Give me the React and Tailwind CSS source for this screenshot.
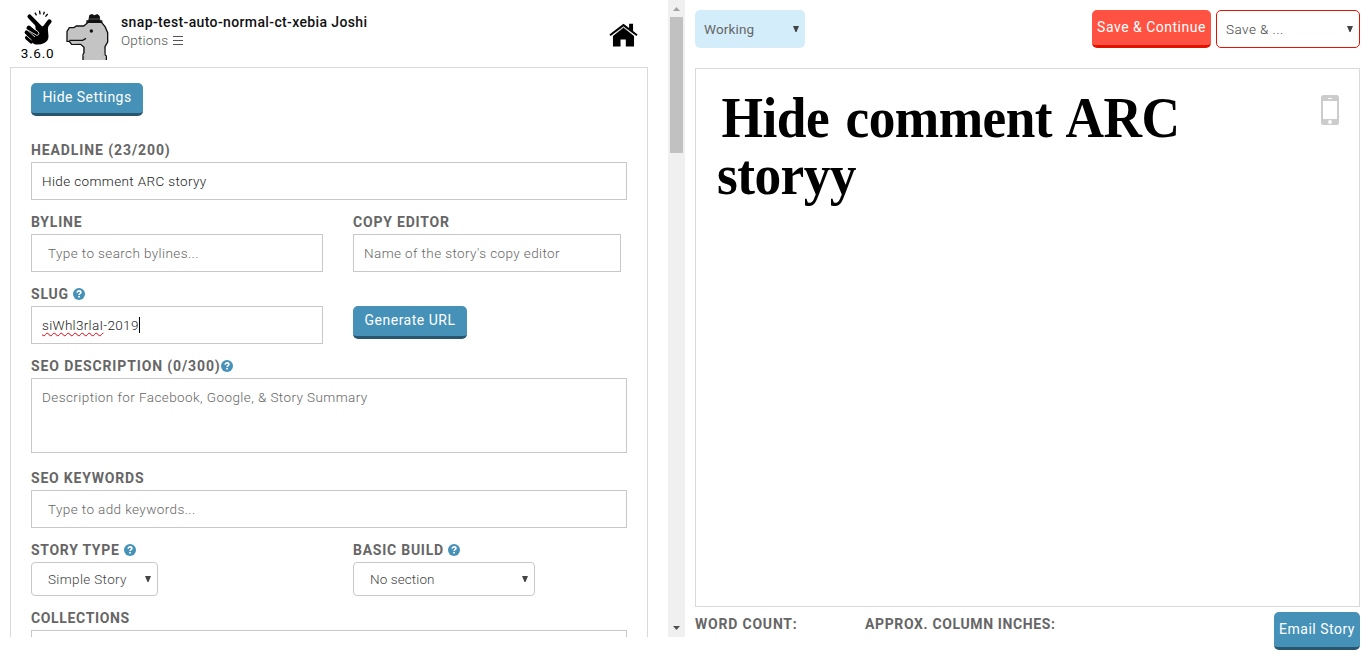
import React from "react";

const Help = ({ className = "" }) => (
  <svg viewBox="0 0 12 12" className={`h-3 w-3 shrink-0 ${className}`}>
    <circle cx="6" cy="6" r="6" fill="#4591b8" />
    <path d="M4.1 4.7C4.2 3.4 5 2.9 6 2.9c1.100 0 1.900.6 1.900 1.500 0 1.300-1.800 1.200-1.800 2.500" fill="none" stroke="#fff" strokeWidth="1.600" />
    <rect x="5.200" y="7.900" width="1.700" height="1.600" fill="#fff" />
  </svg>
);

const Caret = ({ className = "" }) => (
  <svg viewBox="0 0 6 6" className={`h-1.5 w-1.5 shrink-0 ${className}`}>
    <path d="M0 0H6L3.500 6H2.500Z" fill="#444" />
  </svg>
);

const Label = ({ children, help, gap = "ml-1", track = "tracking-[0.800px]" }) => (
  <div className="flex h-6 items-center text-sm font-bold text-[#666] whitespace-nowrap">
    <span className={track}>{children}</span>
    {help && <Help className={gap} />}
  </div>
);

const Box = ({ children, className = "" }) => (
  <div className={`flex border border-[#c8c8c8] text-[13.500px] whitespace-nowrap ${className}`}>{children}</div>
);

const Snap = () => (
  <svg viewBox="68 29 88 106" className="h-[35px] w-[29px]">
    <g fill="none" stroke="#000" strokeLinecap="round">
      <path d="M88 49L120 82" strokeWidth="13" />
      <path d="M148 64L139 76L134 100" strokeWidth="13" />
      <path d="M79 97L99 115M80 113L93 125" strokeWidth="12" />
      <path d="M86 84L110 104" strokeWidth="15" />
      <path d="M104 37L109 45M118 31L120 42M133 34L130 43M143 41L136 49" strokeWidth="4" strokeLinecap="butt" />
    </g>
    <path d="M105 72L126 79L142 69L145 105Q147 121 134 128Q117 137 101 132Q95 128 98 118L108 106Z" />
    <path d="M92 78L114 95Q120 104 110 106L79 88M74 103L94 120" fill="none" stroke="#fff" strokeWidth="2.500" />
  </svg>
);

const Dino = () => (
  <svg viewBox="198 42 129 138" className="h-[46px] w-[43px]">
    <path d="M208 83H222L229 77H252L264 67H305L318 80L323 98V126L317 142L313 151V164L320 180H249V142L242 132L209 128L201 117V94Z" fill="#c4c4c4" />
    <path d="M249 180V164L252 158V142L242 133H215L208 124H201V94L208 83H222L229 78H251L263 68M305 68L315 80L323 98V126L315 140V164L319 168V180M208 121H248L258 115" fill="none" stroke="#111" strokeWidth="4" />
    <path d="M250 164L258 177M314 161L306 173" fill="none" stroke="#aaa" strokeWidth="2" />
    <path d="M259 61H265L268 45L276 42L283 46L292 42L299 48L301 61H307V69H259Z" fill="#111" />
    <path d="M268 57H300" stroke="#555" strokeWidth="3" />
    <circle cx="274" cy="93" r="5" fill="#111" />
  </svg>
);

const Home = () => (
  <svg viewBox="86 70 88 72" className="h-6 w-[29px]">
    <path d="M98 108L130 82L162 108V141H137V120H121V141H98Z" />
    <path d="M89 107L130 76L171 107" fill="none" stroke="#000" strokeWidth="6" />
    <path d="M95 110L130 83L165 110" fill="none" stroke="#fff" strokeWidth="2" />
    <path d="M147 72H159V96L147 87Z" />
  </svg>
);

export default function App() {
  return (
    <div className="flex h-[656px] w-[1370px] overflow-hidden bg-white font-['Roboto',sans-serif] text-sm leading-5">
      <div className="h-[637px] w-[668px] overflow-hidden">
        <header className="flex h-[67px] pl-5">
          <div className="flex w-[34px] flex-col items-center">
            <div className="pt-2.5"><Snap /></div>
            <span className="-mt-[2px] ml-px text-[13.500px] tracking-[0.700px] text-black">3.6.0</span>
          </div>
          <div className="ml-3 pt-3.5"><Dino /></div>
          <div className="ml-3 pt-3 whitespace-nowrap">
            <div className="font-medium tracking-[0.370px] text-[#111]">snap-test-auto-normal-ct-xebia Joshi</div>
            <div className="-mt-[2px] flex items-center font-light text-[#555]">
              <span className="text-[13.500px] tracking-[0.200px]">Options</span>
              <svg viewBox="0 0 10 9" className="ml-[5px] h-[9px] w-2.5"><path d="M0 .5H10M0 4.500H10M0 8.500H10" stroke="#555" /></svg>
            </div>
          </div>
          <div className="mr-[30px] ml-auto pt-[23px]"><Home /></div>
        </header>
        <main className="ml-2.5 h-[700px] w-[638px] border border-[#d9d9d9] px-5 pt-[15px]">
          <button className="block h-[33px] w-28 rounded-[5px] border-b-[3px] border-[#28566e] bg-[#4591b8] pb-[3px] text-sm tracking-[0.450px] text-white">Hide Settings</button>
          <div className="mt-[22px]">
            <Label track="tracking-[0.900px]">HEADLINE (23/200)</Label>
            <Box className="h-[38px] items-center px-2.5 font-light tracking-[0.370px] text-[#222]">Hide comment ARC storyy</Box>
          </div>
          <div className="mt-2.5 flex gap-[30px]">
            <div className="w-[292px]">
              <Label>BYLINE</Label>
              <Box className="h-[38px] items-center px-4 font-light tracking-[0.400px] text-[#666]">Type to search bylines...</Box>
            </div>
            <div className="w-[268px]">
              <Label>COPY EDITOR</Label>
              <Box className="h-[38px] items-center px-2.5 font-light tracking-[0.400px] text-[#666]">Name of the story's copy editor</Box>
            </div>
          </div>
          <div className="mt-2.5 flex gap-[30px]">
            <div className="w-[292px]">
              <Label help>SLUG</Label>
              <Box className="h-[38px] items-center px-2.5 font-light tracking-[0.300px] text-[#222]">
                <span className="underline decoration-red-600 decoration-wavy decoration-1 underline-offset-2">siWhl3rlaI</span>
                <span>-2019</span>
                <span className="h-4 w-px bg-black" />
              </Box>
            </div>
            <button className="mt-6 h-[33px] w-[114px] rounded-[5px] border-b-[3px] border-[#28566e] bg-[#4591b8] pb-[3px] text-sm tracking-[0.500px] text-white">Generate URL</button>
          </div>
          <div className="mt-2.5">
            <Label help gap="ml-0" track="tracking-[0.880px]">SEO DESCRIPTION (0/300)</Label>
            <Box className="h-[75px] px-2.5 pt-2 font-light tracking-[0.420px] text-[#666]">Description for Facebook, Google, &amp; Story Summary</Box>
          </div>
          <div className="mt-[13px]">
            <Label>SEO KEYWORDS</Label>
            <Box className="h-[38px] items-center px-4 font-light tracking-[0.400px] text-[#666]">Type to add keywords...</Box>
          </div>
          <div className="mt-2.5 flex">
            <div className="w-[322px]">
              <Label help track="tracking-[0.700px]">STORY TYPE</Label>
              <Box className="h-[34px] w-[127px] items-center justify-between rounded pr-[6px] pl-4 font-light tracking-[0.350px] text-[#444]">Simple Story<Caret /></Box>
            </div>
            <div>
              <Label help track="tracking-[0.750px]">BASIC BUILD</Label>
              <Box className="h-[34px] w-[182px] items-center justify-between rounded pr-[6px] pl-4 font-light tracking-[0.100px] text-[#444]">No section<Caret /></Box>
            </div>
          </div>
          <div className="mt-2.5">
            <Label track="tracking-[0.650px]">COLLECTIONS</Label>
            <Box className="h-[38px]" />
          </div>
        </main>
      </div>
      <div className="flex h-[637px] w-[17px] flex-col items-center bg-[#f0f0f0]">
        <div className="flex h-[17px] items-center"><svg viewBox="0 0 7 4" className="mt-px h-1 w-[7px]"><path d="M0 4L3.500 0L7 4Z" fill="#a3a3a3" /></svg></div>
        <div className="h-[136px] w-[13px] bg-[#c1c1c1]" />
        <svg viewBox="0 0 7 4" className="mt-auto mb-[7px] h-1 w-[7px]"><path d="M0 0L3.500 4L7 0Z" fill="#505050" /></svg>
      </div>
      <div className="ml-2.5 w-[665px]">
        <div className="flex h-[68px] pt-2.5">
          <div className="flex h-[38px] w-[110px] items-center justify-between rounded-[5px] bg-[#d4edfb] pr-1.5 pl-[9px] text-[13.500px] tracking-[0.150px] text-[#666]">Working<Caret /></div>
          <button className="ml-auto h-[38px] w-[119px] rounded-[5px] border-b-[3px] border-[#e01400] bg-[#ff5242] pb-[2px] text-sm tracking-[0.500px] whitespace-nowrap text-white">Save &amp; Continue</button>
          <div className="ml-[5px] flex h-[38px] w-36 items-center justify-between rounded-[5px] border border-[#e01400] pr-[6px] pl-[9px] text-[13.500px] font-light tracking-[0.450px] text-[#444]">Save &amp; ...<Caret /></div>
        </div>
        <div className="flex h-[539px] justify-between border border-[#d9d9d9] pt-5 pr-5 pl-[21px]">
          <h1 className="w-[580px] origin-top-left scale-x-[0.920] indent-[5px] font-['Liberation_Serif',serif] text-[58px] leading-[57px] font-bold tracking-[-0.600px] text-black [word-spacing:4px]">Hide comment ARC storyy</h1>
          <svg viewBox="0 0 18 30" className="mt-1.5 h-[30px] w-[18px] shrink-0">
            <rect width="18" height="30" rx="2.500" fill="#ccc" />
            <path d="M2 6H16V24H2ZM7 3H11V4H7Z" fill="#fff" />
            <circle cx="9" cy="27" r="1.900" fill="#fff" />
          </svg>
        </div>
        <footer className="flex pt-[5px]">
          <div className="w-[170px]"><Label>WORD COUNT:</Label></div>
          <Label track="tracking-[0.630px]">APPROX. COLUMN INCHES:</Label>
          <button className="ml-auto h-[38px] w-[86px] rounded-[5px] border-b-[3px] border-[#28566e] bg-[#4591b8] pb-px text-sm tracking-[0.500px] whitespace-nowrap text-white">Email Story</button>
        </footer>
      </div>
    </div>
  );
}
